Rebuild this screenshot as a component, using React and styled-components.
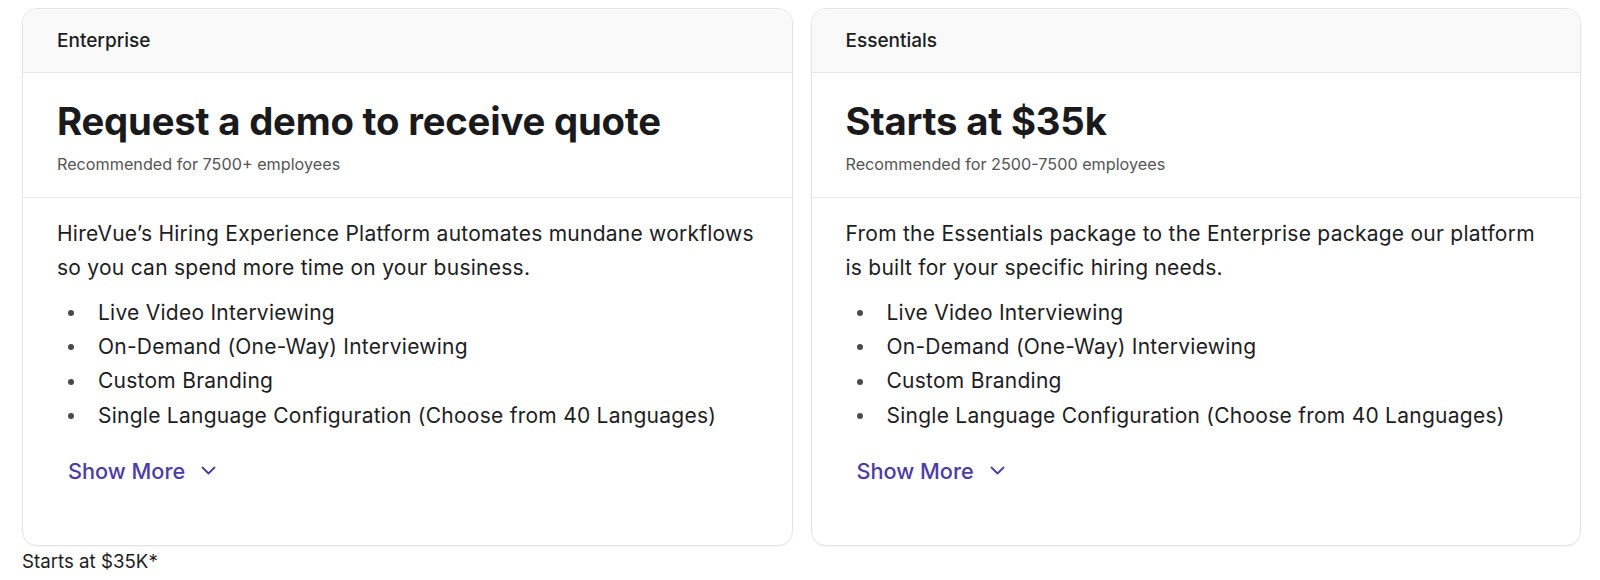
import styled, { createGlobalStyle } from 'styled-components';

const Global = createGlobalStyle`
    body {
        margin: 0;
        background: #fff;
        font-family: Inter, "Noto Sans", sans-serif;
        color: #1d1d1f;
    }
`

const Page = styled.div`
    padding: 8px 19px 0 22px;
`

const Grid = styled.div`
    display: grid;
    grid-template-columns: 1fr 1fr;
    gap: 18px;
`

const Card = styled.div`
    border: 1px solid #e4e4e4;
    border-radius: 15px;
    box-shadow: 0 1px 2px rgba(0, 0, 0, 0.06);
    overflow: hidden;
    height: 538px;
    box-sizing: border-box;
`

const Tier = styled.div`
    height: 64px;
    box-sizing: border-box;
    background: #f9f9f9;
    border-bottom: 1px solid #e6e6e6;
    display: flex;
    align-items: center;
    padding: 0 34px;
    font-size: 19px;
    font-weight: 500;
    color: #1d1d1f;
`

const Head = styled.div`
    padding: 25px 34px 23px;
    border-bottom: 1px solid #e8e8e8;
`

const Price = styled.h2`
    margin: 0;
    font-size: 38.3px;
    font-weight: 700;
    line-height: 46px;
    letter-spacing: -0.2px;
    color: #1a1a1c;
`

const Note = styled.div`
    margin-top: 10px;
    font-size: 16.2px;
    line-height: 20px;
    color: #555;
`

const Body = styled.div`
    padding: 19px 34px 0;
`

const Lead = styled.p`
    margin: 0;
    font-size: 21px;
    letter-spacing: 0.25px;
    line-height: 34px;
    color: #1d1d1f;
`

const List = styled.ul`
    margin: 11px 0 0;
    padding: 0;
    list-style: none;
`

const Item = styled.li`
    display: flex;
    align-items: center;
    font-size: 21px;
    letter-spacing: 0.25px;
    line-height: 34.2px;
    &::before {
        content: "";
        flex-shrink: 0;
        width: 6px;
        height: 6px;
        border-radius: 50%;
        background: #4a4a4a;
        margin: 0 24px 0 11px;
    }
`

const More = styled.button`
    margin: 24px 0 0 11px;
    padding: 0;
    border: 0;
    background: none;
    display: flex;
    align-items: center;
    gap: 16px;
    font-family: inherit;
    font-size: 21.7px;
    line-height: 28px;
    font-weight: 500;
    color: #4b3ca5;
    cursor: pointer;
`

const Foot = styled.div`
    margin-top: 5px;
    font-size: 18.7px;
    line-height: 22px;
    color: #1d1d1f;
`

const features = [
    'Live Video Interviewing',
    'On-Demand (One-Way) Interviewing',
    'Custom Branding',
    'Single Language Configuration (Choose from 40 Languages)',
]

const plans = [
    {
        tier: 'Enterprise',
        price: 'Request a demo to receive quote',
        note: 'Recommended for 7500+ employees',
        lead: 'HireVue’s Hiring Experience Platform automates mundane workflows so you can spend more time on your business.',
    },
    {
        tier: 'Essentials',
        price: 'Starts at $35k',
        note: 'Recommended for 2500-7500 employees',
        lead: 'From the Essentials package to the Enterprise package our platform is built for your specific hiring needs.',
    },
]

const Chevron = () => (
    <svg width="15" height="15" viewBox="0 0 15 15" fill="none" stroke="currentColor" strokeWidth="1.8" strokeLinecap="round" strokeLinejoin="round">
        <path d="M1.5 4.5l6 6 6-6" />
    </svg>
)

const App = () => {
    return (
        <Page>
            <Global />
            <Grid>
                {plans.map(p => (
                    <Card key={p.tier}>
                        <Tier>{p.tier}</Tier>
                        <Head>
                            <Price>{p.price}</Price>
                            <Note>{p.note}</Note>
                        </Head>
                        <Body>
                            <Lead>{p.lead}</Lead>
                            <List>
                                {features.map(f => <Item key={f}>{f}</Item>)}
                            </List>
                            <More>Show More <Chevron /></More>
                        </Body>
                    </Card>
                ))}
            </Grid>
            <Foot>Starts at $35K*</Foot>
        </Page>
    )
}

export default App
